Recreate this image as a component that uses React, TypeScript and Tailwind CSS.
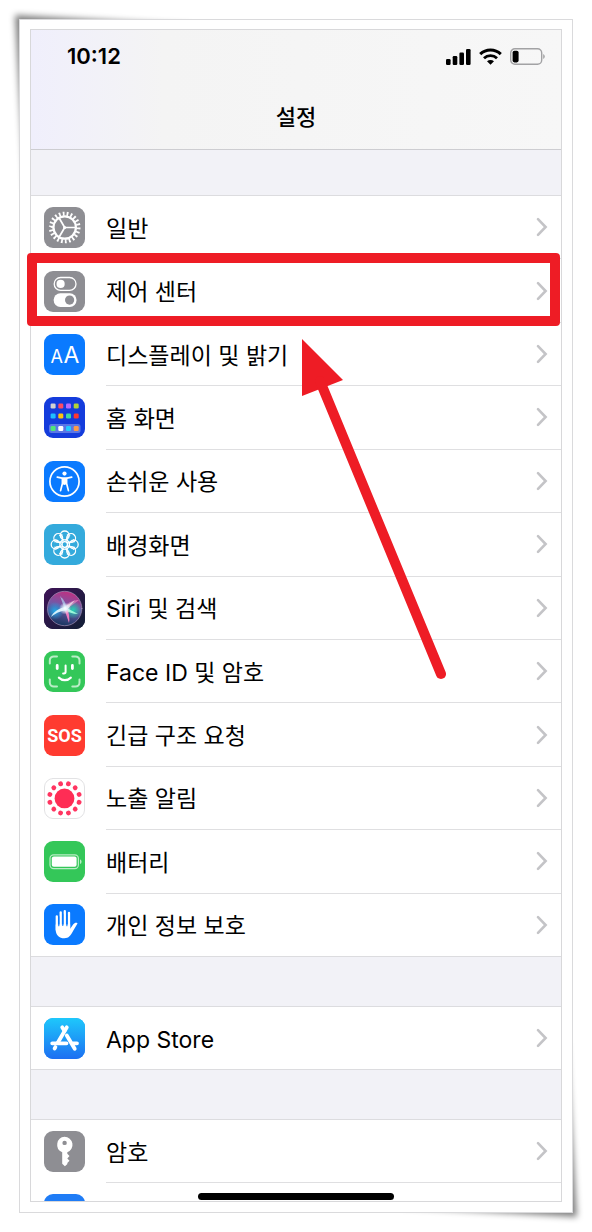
import type { ReactNode } from "react";

type Item = {
  label: string;
  icon: ReactNode;
  highlighted?: boolean;
};

const Tile = ({ color, children }: { color: string; children?: ReactNode }) => (
  <svg
    viewBox="0 0 41 41"
    className="size-[41px] shrink-0"
    fill="none"
    stroke="none"
    strokeLinecap="round"
    strokeLinejoin="round"
    aria-hidden="true"
  >
    <rect width="41" height="41" rx="9" fill={color} />
    {children}
  </svg>
);

const GearIcon = () => (
  <Tile color="#8e8e93">
    <g stroke="#fff" strokeLinecap="butt">
      <circle cx="20.7" cy="20.5" r="13.8" strokeWidth="4" pathLength="44" strokeDasharray="0.9 1.1" />
      <circle cx="20.7" cy="20.5" r="11.2" strokeWidth="2.2" />
      <path d="M20.7 20.5H32M20.7 20.5 15 10.8M20.7 20.5 15 30.2" strokeWidth="1.7" />
    </g>
    <circle cx="20.7" cy="20.5" r="1.6" fill="#fff" />
  </Tile>
);

const TogglesIcon = () => (
  <Tile color="#8e8e93">
    <rect x="10.2" y="6.5" width="21.8" height="12.8" rx="6.4" stroke="#fff" strokeWidth="1.3" />
    <circle cx="16.6" cy="12.9" r="4.1" fill="#fff" />
    <rect x="9.6" y="22.3" width="23" height="13.6" rx="6.8" fill="#fff" />
    <circle cx="25.6" cy="29.1" r="4.6" fill="#8e8e93" />
  </Tile>
);

const DisplayIcon = () => (
  <Tile color="#0a7aff">
    <g fill="#fff" fontFamily="Inter, sans-serif" textAnchor="middle">
      <text x="12.8" y="29.2" fontSize="18">A</text>
      <text x="27.4" y="29.2" fontSize="23">A</text>
    </g>
  </Tile>
);

const homeDots = [
  ["#d2d2d2", "#ff4b64", "#b469ff", "#b4d237"],
  ["#1ebeff", "#ffc30f", "#3cd7a5", "#ff372d"],
  ["#50e678", "#ffffff", "#23cdff", "#ff9b46"],
];
const homeRows = [6.5, 16.5, 29];

const HomeIcon = () => (
  <Tile color="#143cdc">
    <rect x="5" y="27" width="31.5" height="9" rx="2.5" fill="#fff" fillOpacity=".3" />
    {homeDots.map((row, y) =>
      row.map((color, x) => (
        <rect key={color} x={6.6 + x * 7.7} y={homeRows[y]} width="5" height="5" rx="1.3" fill={color} />
      ))
    )}
  </Tile>
);

const AccessibilityIcon = () => (
  <Tile color="#0a7aff">
    <circle cx="20.5" cy="20.5" r="14.6" stroke="#fff" strokeWidth="1.7" />
    <circle cx="20.5" cy="12.6" r="2.1" fill="#fff" />
    <path d="M13.3 16.2 18 17.1H23L27.7 16.2" stroke="#fff" strokeWidth="1.7" />
    <path d="M22.6 17.5V22.5L24.4 29.6M18.4 17.5V22.5L16.6 29.6" stroke="#fff" strokeWidth="1.7" />
    <path d="M18 17H23V23L20.5 24 18 23Z" fill="#fff" />
  </Tile>
);

const petals = [0, 45, 90, 135, 180, 225, 270, 315];

const WallpaperIcon = () => (
  <Tile color="#34aadc">
    <g stroke="#fff" strokeWidth="1.3">
      {petals.map((angle) => (
        <g key={angle} transform={`rotate(${angle} 20.7 20.5)`}>
          <circle cx="20.7" cy="11.4" r="4.4" />
          <path d="M20.7 17.7C17.5 14.7 17.2 12.5 18 10.5M20.7 17.7C23.9 14.7 24.2 12.5 23.4 10.5" strokeWidth=".9" />
        </g>
      ))}
      <circle cx="20.7" cy="20.5" r="2.8" />
    </g>
  </Tile>
);

const SiriIcon = () => (
  <Tile color="#20183c">
    <defs>
      <linearGradient id="siri-bg" x1="0" y1="0" x2="1" y2="1">
        <stop offset="0" stopColor="#3f1357" />
        <stop offset="1" stopColor="#101f35" />
      </linearGradient>
      <linearGradient id="siri-orb" x1=".65" y1="0" x2=".4" y2="1">
        <stop offset="0" stopColor="#c22f80" />
        <stop offset=".45" stopColor="#705aa8" />
        <stop offset="1" stopColor="#183660" />
      </linearGradient>
      <radialGradient id="siri-blue">
        <stop offset="0" stopColor="#21a9e8" />
        <stop offset="1" stopColor="#21a9e8" stopOpacity="0" />
      </radialGradient>
      <radialGradient id="siri-green">
        <stop offset="0" stopColor="#22d3b1" />
        <stop offset="1" stopColor="#22d3b1" stopOpacity="0" />
      </radialGradient>
      <radialGradient id="siri-glow">
        <stop offset="0" stopColor="#fff" />
        <stop offset=".4" stopColor="#e0f7ff" stopOpacity=".8" />
        <stop offset="1" stopColor="#fff" stopOpacity="0" />
      </radialGradient>
    </defs>
    <rect width="41" height="41" rx="9" fill="url(#siri-bg)" />
    <circle cx="20.7" cy="20.5" r="17" fill="url(#siri-orb)" />
    <circle cx="11" cy="23" r="9" fill="url(#siri-blue)" />
    <circle cx="29" cy="22" r="9" fill="url(#siri-green)" />
    <path d="M20 19C24 14 30 12 35 12L23 21Z" fill="#ff8fc9" fillOpacity=".55" />
    <path d="M20 19 16 8C19 11 22 14 22 20Z" fill="#b6e7ff" fillOpacity=".6" />
    <path d="M21 19 34 26C29 26 24 24 20 22Z" fill="#a5ffdf" fillOpacity=".9" />
    <path d="M20 20 25 35C26 31 25 25 23 19Z" fill="#ff7fc4" fillOpacity=".9" />
    <path d="M22 19C15 20 9 24 7 29 13 24 18 23 23 22Z" fill="#e5fbff" fillOpacity=".9" />
    <path d="M19 20 31 12 23 22Z" fill="#fff" fillOpacity=".6" />
    <circle cx="21" cy="20.5" r="6" fill="url(#siri-glow)" />
    <circle cx="20.7" cy="20.5" r="17.2" stroke="#b9a6cc" strokeOpacity=".65" strokeWidth=".9" />
  </Tile>
);

const FaceIdIcon = () => (
  <Tile color="#34c759">
    <path
      d="M5.8 12.5V9.4a4 4 0 0 1 4-4H13M28.3 5.4h3.2a4 4 0 0 1 4 4V12.5M35.5 28.5v3.1a4 4 0 0 1-4 4H28.3M13 35.6H9.8a4 4 0 0 1-4-4V28.5"
      stroke="#b9edc6"
      strokeWidth="2"
    />
    <g stroke="#fff" strokeWidth="2.4">
      <path d="M13.2 14.5v3M28.4 14.5v3" strokeWidth="2.8" />
      <path d="M21.6 14.5v6.2a1.7 1.7 0 0 1-1.7 1.7h-.8" strokeWidth="2" />
      <path d="M15 26.7c3 3.2 8.7 3.2 11.7 0" />
    </g>
  </Tile>
);

const SosIcon = () => (
  <Tile color="#ff3b30">
    <text
      x="20.5"
      y="27"
      fill="#fff"
      fontFamily="Roboto, sans-serif"
      fontSize="18"
      fontWeight="700"
      textAnchor="middle"
    >
      SOS
    </text>
  </Tile>
);

const exposureDots = [15, 45, 75, 105, 135, 165, 195, 225, 255, 285, 315, 345];

const ExposureIcon = () => (
  <Tile color="#fff">
    <rect x=".5" y=".5" width="40" height="40" rx="8.5" stroke="#e2e2e4" />
    <circle cx="20.5" cy="20.4" r="9.9" fill="#ff2d55" />
    {exposureDots.map((angle) => (
      <circle key={angle} cx="20.5" cy="5.3" r="2.4" fill="#ff3561" transform={`rotate(${angle} 20.5 20.4)`} />
    ))}
  </Tile>
);

const BatteryIcon = () => (
  <Tile color="#34c759">
    <rect x="6" y="13.8" width="28.4" height="13.8" rx="3.6" stroke="#b9edc6" strokeWidth="1.2" />
    <rect x="7.8" y="15.6" width="24.8" height="10.2" rx="2" fill="#fff" />
    <path d="M36 18.3a2.6 2.6 0 0 1 0 4.8Z" fill="#b9edc6" />
  </Tile>
);

const HandIcon = () => (
  <Tile color="#0a7aff">
    <g stroke="#fff" strokeWidth="2.3">
      <path d="M12.8 12.3V26M16.7 8.3V22M20.8 7.2V22M25 8.8V24" />
    </g>
    <path
      d="M11.7 20.5H26.2V24.7L29.3 20.3C30.3 18.9 32 18.3 33.2 19 33.6 19.2 33.5 19.7 33.2 20.1L29.2 26.7C26.6 31.5 24.8 34.2 20.4 34.2 15.2 34.2 11.7 31 11.7 25.4Z"
      fill="#fff"
    />
    <path d="M14.8 12.5V21.8M18.8 10V21.5M22.9 10.5V21.8" stroke="#0a7aff" strokeWidth="1.1" />
  </Tile>
);

const AppStoreIcon = () => (
  <Tile color="#1e96f7">
    <defs>
      <linearGradient id="store-bg" x1="0" y1="0" x2="0" y2="1">
        <stop offset="0" stopColor="#1ec8fb" />
        <stop offset="1" stopColor="#1d6ff2" />
      </linearGradient>
    </defs>
    <rect width="41" height="41" rx="9" fill="url(#store-bg)" />
    <g stroke="#fff" strokeWidth="3.8">
      <path d="M22.8 9.3 13.6 25M11.4 29.1 10.6 30.5" />
      <path d="M18.2 9.3 20.5 13M22.8 17.5 30.7 30.8" />
      <path d="M8.2 25.3H22.5M29 25.3H33" />
    </g>
  </Tile>
);

const KeyIcon = () => (
  <Tile color="#8e8e93">
    <path
      d="M20.6 5.8a8 8 0 0 1 2.7 15.5v1.4l2.2 2.4-2.2 2.3 2.2 2.3-2.2 2.2.1 1-2.5 2.4-2.7-2.5V21.2A8 8 0 0 1 20.6 5.8Z"
      fill="#fff"
    />
    <circle cx="20.6" cy="11.9" r="2.2" fill="#8e8e93" />
  </Tile>
);

const general: Item[] = [
  { label: "일반", icon: <GearIcon /> },
  { label: "제어 센터", icon: <TogglesIcon />, highlighted: true },
  { label: "디스플레이 및 밝기", icon: <DisplayIcon /> },
  { label: "홈 화면", icon: <HomeIcon /> },
  { label: "손쉬운 사용", icon: <AccessibilityIcon /> },
  { label: "배경화면", icon: <WallpaperIcon /> },
  { label: "Siri 및 검색", icon: <SiriIcon /> },
  { label: "Face ID 및 암호", icon: <FaceIdIcon /> },
  { label: "긴급 구조 요청", icon: <SosIcon /> },
  { label: "노출 알림", icon: <ExposureIcon /> },
  { label: "배터리", icon: <BatteryIcon /> },
  { label: "개인 정보 보호", icon: <HandIcon /> },
];

const Chevron = () => (
  <svg viewBox="0 0 12 20" className="ml-auto h-5 w-3 shrink-0" fill="none" aria-hidden="true">
    <path d="M2 2.2 9.6 10 2 17.8" stroke="#c4c4c7" strokeWidth="2.6" strokeLinecap="round" />
  </svg>
);

const Row = ({ item, last }: { item: Item; last?: boolean }) => (
  <li className={last ? "relative border-b border-[#dcdcdf]" : "relative"}>
    <a href="#" className="flex h-full items-center pl-[13px]">
      {item.icon}
      <span
        className={
          last
            ? "ml-[21px] flex h-full flex-1 items-center pr-[13px]"
            : "ml-[21px] flex h-full flex-1 items-center border-b border-[#dfdfe1] pr-[13px]"
        }
      >
        <span className="pt-[3px]">{item.label}</span>
        <Chevron />
      </span>
    </a>
    {item.highlighted && (
      <div className="absolute -top-1.5 right-px -bottom-[3px] -left-1 z-10 rounded border-10 border-[#ee1c25]" />
    )}
  </li>
);

const StatusBar = () => (
  <div className="flex h-[52px] items-center pr-4 pl-9">
    <time className="text-[22px] font-semibold">10:12</time>
    <div className="ml-auto flex items-center gap-2">
      <svg viewBox="0 0 25 17" className="h-[17px] w-[25px]" aria-hidden="true">
        <rect x="0" y="11" width="4.6" height="6" rx="1.2" />
        <rect x="6.7" y="8" width="4.6" height="9" rx="1.2" />
        <rect x="13.4" y="4.5" width="4.6" height="12.5" rx="1.2" />
        <rect x="20" y="1" width="4.6" height="16" rx="1.2" />
      </svg>
      <svg viewBox="0 0 23 17" className="h-[17px] w-[23px]" fill="none" stroke="#000" aria-hidden="true">
        <path d="M1.2 6.2C7 .6 16 .6 21.8 6.2" strokeWidth="3" />
        <path d="M5 10.2C8.6 6.7 14.4 6.7 18 10.2" strokeWidth="2.8" />
        <path d="M8 13.2C10 11.5 13 11.5 15 13.2L11.5 16.8Z" fill="#000" stroke="none" />
      </svg>
      <svg viewBox="0 0 35 17" className="h-[17px] w-[35px]" fill="none" aria-hidden="true">
        <rect x=".7" y=".7" width="31" height="15.6" rx="4.2" stroke="#a2a2a4" strokeWidth="1.4" />
        <rect x="2.6" y="2.8" width="6" height="11.6" rx="1.8" fill="#000" />
        <path d="M33.2 6a2.8 2.8 0 0 1 0 5Z" fill="#a2a2a4" />
      </svg>
    </div>
  </div>
);

const Pointer = () => (
  <svg
    viewBox="0 0 150 344"
    className="pointer-events-none absolute top-[309px] left-[271px] z-10 h-[344px] w-[150px]"
    aria-hidden="true"
  >
    <path d="M0 0 41 41 0 57Z" fill="#ee1c25" />
    <path d="M18 42 139 335" stroke="#ee1c25" strokeWidth="10" strokeLinecap="round" />
  </svg>
);

const CornerShadow = ({ className }: { className: string }) => (
  <svg viewBox="0 0 220 220" className={className} aria-hidden="true">
    <path d="M15 15 190 25 25 190Z" fill="#000" fillOpacity=".5" className="blur-[3px]" />
  </svg>
);

export default function App() {
  return (
    <div className="bg-white p-[19px] font-['Inter','Noto_Sans_CJK_KR',sans-serif] text-black">
      <div className="relative">
        <CornerShadow className="absolute -top-[19px] -left-[19px] size-[220px]" />
        <CornerShadow className="absolute -right-[19px] -bottom-[19px] size-[220px] rotate-180" />

        <div className="relative border border-[#dadadc] bg-white px-[10px] pt-[9px] pb-[10px]">
          <main className="relative border border-[#d8d8da] bg-[#f2f2f7]">
            <header className="border-b border-[#cdcdd1] bg-linear-to-r from-[#f0effc] via-[#f4f4f4] via-25% to-[#f7f7f7]">
              <StatusBar />
              <h1 className="flex h-[67px] items-center justify-center pt-1 text-[22px] font-medium">설정</h1>
            </header>

            <nav className="text-[23px] leading-8">
              <ul className="mt-[45px] grid min-h-[762px] auto-rows-fr border-t border-[#dcdcdf] bg-white">
                {general.map((item, i) => (
                  <Row key={item.label} item={item} last={i === general.length - 1} />
                ))}
              </ul>

              <ul className="mt-[49px] grid min-h-16 border-t border-[#dcdcdf] bg-white">
                <Row item={{ label: "App Store", icon: <AppStoreIcon /> }} last />
              </ul>

              <ul className="mt-[49px] grid grid-rows-[63px_18px] border-t border-[#dcdcdf] bg-white">
                <Row item={{ label: "암호", icon: <KeyIcon /> }} />
                <li className="overflow-hidden pt-[11px] pl-[13px]">
                  <Tile color="#1f7cf6" />
                </li>
              </ul>
            </nav>

            <Pointer />
            <div className="absolute bottom-px left-1/2 h-[7px] w-[196px] -translate-x-1/2 rounded-full bg-black" />
          </main>
        </div>
      </div>
    </div>
  );
}
